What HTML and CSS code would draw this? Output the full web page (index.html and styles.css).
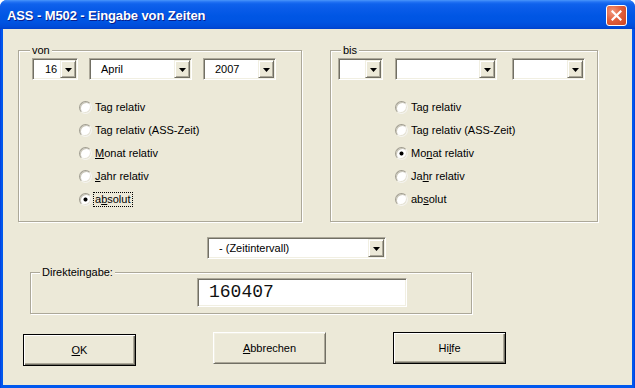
FILE: index.html
```html
<!DOCTYPE html>
<html>
<head>
<meta charset="utf-8">
<link rel="stylesheet" href="styles.css">
</head>
<body>
<div class="window">
  <div class="titlebar">
    <span class="title">ASS - M502 - Eingabe von Zeiten</span>
    <span class="close"><svg width="11" height="11" viewBox="0 0 11 11"><path d="M1.5 1.5 L9.5 9.5 M9.5 1.5 L1.5 9.5" stroke="#fff" stroke-width="2.2" stroke-linecap="square"/></svg></span>
  </div>
  <div class="client">
    <div class="groups">
      <div class="group von">
        <span class="legend">von</span>
        <div class="combos">
          <div class="combo w-day"><span class="val">16</span><span class="dd"><svg width="7" height="4" viewBox="0 0 7 4"><path d="M0 0H7L3.5 4Z" fill="#000"/></svg></span></div>
          <div class="combo w-month gap11"><span class="val">April</span><span class="dd"><svg width="7" height="4" viewBox="0 0 7 4"><path d="M0 0H7L3.5 4Z" fill="#000"/></svg></span></div>
          <div class="combo w-year gap11"><span class="val">2007</span><span class="dd"><svg width="7" height="4" viewBox="0 0 7 4"><path d="M0 0H7L3.5 4Z" fill="#000"/></svg></span></div>
        </div>
        <div class="radios">
          <div class="radio"><span class="rb"></span><span class="lbl">Tag relativ</span></div>
          <div class="radio"><span class="rb"></span><span class="lbl">Tag relativ (ASS-Zeit)</span></div>
          <div class="radio"><span class="rb"></span><span class="lbl"><u>M</u>onat relativ</span></div>
          <div class="radio"><span class="rb"></span><span class="lbl"><u>J</u>ahr relativ</span></div>
          <div class="radio"><span class="rb on"></span><span class="lbl focus">a<u>b</u>solut</span></div>
        </div>
      </div>
      <div class="group bis">
        <span class="legend">bis</span>
        <div class="combos">
          <div class="combo w-day2"><span class="val"></span><span class="dd"><svg width="7" height="4" viewBox="0 0 7 4"><path d="M0 0H7L3.5 4Z" fill="#000"/></svg></span></div>
          <div class="combo w-month2 gap12"><span class="val"></span><span class="dd"><svg width="7" height="4" viewBox="0 0 7 4"><path d="M0 0H7L3.5 4Z" fill="#000"/></svg></span></div>
          <div class="combo w-year gap15"><span class="val"></span><span class="dd"><svg width="7" height="4" viewBox="0 0 7 4"><path d="M0 0H7L3.5 4Z" fill="#000"/></svg></span></div>
        </div>
        <div class="radios">
          <div class="radio"><span class="rb"></span><span class="lbl">Tag relativ</span></div>
          <div class="radio"><span class="rb"></span><span class="lbl">Tag relativ (ASS-Zeit)</span></div>
          <div class="radio"><span class="rb on"></span><span class="lbl">Mo<u>n</u>at relativ</span></div>
          <div class="radio"><span class="rb"></span><span class="lbl">Ja<u>h</u>r relativ</span></div>
          <div class="radio"><span class="rb"></span><span class="lbl">ab<u>s</u>olut</span></div>
        </div>
      </div>
    </div>
    <div class="mid-row">
      <div class="combo w-mid"><span class="val">- (Zeitintervall)</span><span class="dd"><svg width="7" height="4" viewBox="0 0 7 4"><path d="M0 0H7L3.5 4Z" fill="#000"/></svg></span></div>
    </div>
    <div class="group direkt">
      <span class="legend">Direkteingabe:</span>
      <div class="edit">160407</div>
    </div>
    <div class="buttons">
      <div class="button default ok"><span><u>O</u>K</span></div>
      <div class="button cancel"><span><u>A</u>bbrechen</span></div>
      <div class="button default help"><span>Hi<u>l</u>fe</span></div>
    </div>
  </div>
</div>
</body>
</html>
```
FILE: styles.css
```css
* { box-sizing: border-box; }
body {
  margin: 0;
  background: #ffffff;
  font-family: "Liberation Sans", Arial, sans-serif;
  font-size: 11px;
  color: #000;
}
.window {
  width: 635px;
  height: 388px;
  display: flex;
  flex-direction: column;
  background: linear-gradient(to right, #0831D9 0, #0055EA 1px, #0058EE 3px, #0058EE 632px, #0055EA 634px, #0831D9 635px);
  border-radius: 7px 7px 0 0;
  overflow: hidden;
}
.titlebar {
  height: 29px;
  flex: none;
  display: flex;
  align-items: center;
  justify-content: space-between;
  padding: 0 8px 0 7px;
  background: linear-gradient(to bottom, #4A96FA 0px, #2272F3 2px, #0F62EC 4px, #0A5CE9 8px, #0056E4 16px, #0054E2 22px, #004BD8 27px, #0041CB 29px);
}
.title {
  color: #fff;
  font-weight: bold;
  font-size: 13px;
  letter-spacing: -0.1px;
  text-shadow: 1px 1px 0 #0A1E8A;
  padding-top: 1px;
}
.close {
  width: 21px;
  height: 21px;
  border: 1px solid #fff;
  border-radius: 3px;
  background: radial-gradient(circle at 30% 30%, #F29A7E 0%, #E2603C 45%, #CC4320 100%);
  display: flex;
  align-items: center;
  justify-content: center;
  margin-top: 1px;
}
.client {
  flex: 1;
  margin: 0 3px 3px 3px;
  background: #ECE9D8;
  padding: 21px 0 0 15px;
}
.groups {
  display: flex;
  gap: 28px;
}
.group {
  position: relative;
  border: 1px solid #ACA899;
  box-shadow: 1px 1px 0 #fff, inset 1px 1px 0 #fff;
}
.legend {
  position: absolute;
  top: -7px;
  padding: 0 2px;
  background: #ECE9D8;
  line-height: 13px;
  white-space: nowrap;
}
.von { width: 284px; height: 172px; padding: 7px 0 0 13px; }
.von .legend { left: 11px; }
.bis { width: 268px; height: 172px; padding: 7px 0 0 7px; }
.bis .legend { left: 10px; }
.combos { display: flex; }
.gap11 { margin-left: 11px; }
.gap12 { margin-left: 12px; }
.gap15 { margin-left: 15px; }
.w-day { width: 46px; }
.w-day2 { width: 45px; }
.w-month { width: 103px; }
.w-month2 { width: 102px; }
.w-year { width: 73px; }
.w-mid { width: 179px; }
.combo {
  display: flex;
  height: 22px;
  background: #fff;
  border: 1px solid;
  border-color: #ACA899 #fff #fff #ACA899;
  box-shadow: inset 1px 1px 0 #716F64, inset -1px -1px 0 #F1EFE2;
  padding: 1px;
}
.combo .val {
  flex: 1;
  padding-left: 10px;
  line-height: 18px;
  white-space: nowrap;
}
.w-day .val { padding-left: 11px; }
.combo .dd {
  width: 16px;
  height: 18px;
  flex: none;
  background: #ECE9D8;
  border: 1px solid;
  border-color: #F1EFE2 #716F64 #716F64 #F1EFE2;
  box-shadow: inset 1px 1px 0 #fff, inset -1px -1px 0 #ACA899;
  display: flex;
  align-items: center;
  justify-content: center;
}
.combo .dd svg { display: block; margin-top: 1px; }
.radios { margin-top: 16px; }
.von .radios { padding-left: 47px; }
.bis .radios { padding-left: 57px; }
.radio {
  height: 23px;
  display: flex;
  align-items: center;
  gap: 3px;
}
.rb {
  width: 13px;
  height: 13px;
  flex: none;
  border-radius: 50%;
  background: #fff;
  border: 1px solid;
  border-color: #A09D90 #F4F3EE #F4F3EE #A09D90;
  box-shadow: inset 1px 1px 0 #C9C6B8, inset -1px -1px 0 #E6E3D6;
}
.rb.on {
  background: radial-gradient(circle, #000 0, #000 1.6px, #fff 2.4px);
}
.lbl { white-space: nowrap; line-height: 13px; }
.focus {
  border: 1px dotted #000;
  padding: 0 1px;
  margin-left: -2px;
}
.mid-row {
  margin-top: 15px;
  padding-left: 189px;
}
.mid-row .val { padding-left: 10px; }
.direkt {
  margin: 13px 0 0 12px;
  width: 442px;
  height: 42px;
  padding: 5px 0 0 166px;
}
.direkt .legend { left: 9px; }
.edit {
  width: 210px;
  height: 29px;
  background: #fff;
  border: 1px solid;
  border-color: #ACA899 #fff #fff #ACA899;
  box-shadow: inset 1px 1px 0 #716F64, inset -1px -1px 0 #F1EFE2;
  font-family: "Liberation Mono", "Courier New", monospace;
  font-size: 18px;
  line-height: 27px;
  padding-left: 11px;
  color: #111;
}
.buttons {
  display: flex;
  align-items: flex-start;
  margin: 18px 0 0 5px;
}
.button {
  width: 113px;
  height: 32px;
  display: flex;
  align-items: center;
  justify-content: center;
  background: #ECE9D8;
}
.button.default {
  border: 1px solid #000;
  box-shadow: inset 1px 1px 0 #fff, inset -1px -1px 0 #716F64, inset -2px -2px 0 #ACA899;
}
.button.cancel {
  border: 1px solid;
  border-color: #fff #716F64 #716F64 #fff;
  box-shadow: inset 1px 1px 0 #F1EFE2, inset -1px -1px 0 #ACA899;
}
.ok { margin-top: 2px; }
.cancel { margin-left: 77px; }
.help { margin-left: 67px; }
```
